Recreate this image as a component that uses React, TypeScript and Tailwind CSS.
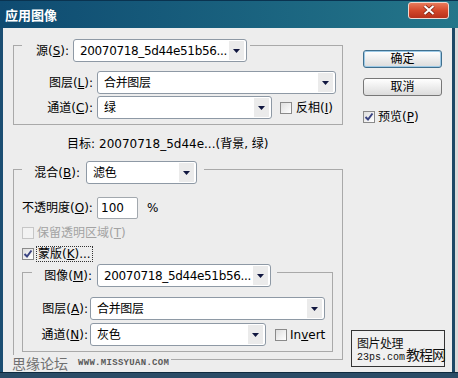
import React from "react";

const Arrow = () => (
  <svg width="7" height="4" viewBox="0 0 7 4">
    <path d="M0 0h7L3.5 4z" fill="#10163f" />
  </svg>
);

function Select({ value, w }: { value: string; w: string }) {
  return (
    <div
      className={`flex h-[23px] shrink-0 items-center rounded-[3px] border border-[#8e99a5] bg-white ${w}`}
    >
      <span className="flex-1 overflow-hidden whitespace-nowrap pl-[6px] tracking-[-0.35px] text-black">
        {value}
      </span>
      <span className="mr-[2px] flex h-[19px] w-[15px] shrink-0 items-center justify-center bg-[#ebebeb]">
        <Arrow />
      </span>
    </div>
  );
}

function Check({ on, off }: { on?: boolean; off?: boolean }) {
  return (
    <span
      className={`flex h-[12px] w-[12px] shrink-0 items-center justify-center border ${
        off
          ? "border-[#c6c6c6] bg-[#f2f2f2]"
          : "border-[#8a8a8a] bg-linear-to-br from-[#dedede] to-white"
      }`}
    >
      {on && (
        <svg width="10" height="10" viewBox="0 0 10 10">
          <path d="M1.5 5 L4 7.5 L8.5 1.5" stroke="#3a4482" strokeWidth="2" fill="none" />
        </svg>
      )}
    </span>
  );
}

function Button({ label, main }: { label: string; main?: boolean }) {
  return (
    <div
      className={`flex h-[18px] w-[79px] items-center justify-center rounded-[3px] border bg-linear-to-b from-white to-[#dcdcdc] text-black ${
        main
          ? "border-[#3f6f8e] shadow-[inset_0_0_0_1px_#9cc9e6]"
          : "border-[#777777]"
      }`}
    >
      {label}
    </div>
  );
}

const U = ({ c }: { c: string }) => <span className="underline">{c}</span>;

const App: React.FC = () => {
  return (
    <div className="relative flex h-[378px] w-[458px] flex-col overflow-hidden bg-[#1f3d54] text-[12px] leading-[14px] font-['DejaVu_Sans','Noto_Sans_CJK_SC',sans-serif] text-black">
      {/* title bar */}
      <div className="flex h-[28px] items-center justify-between border-t border-[#0a3350] bg-linear-to-r from-[#0f4b71] to-[#24768a] pl-[5px] pr-[9px]">
        <span className="text-[13px] font-bold text-white font-['Noto_Sans_CJK_SC',sans-serif]">
          应用图像
        </span>
        <div className="mb-[9px] flex h-[17px] w-[41px] items-center justify-center rounded-[3px] border border-[#f0d8d0] bg-linear-to-b from-[#e87a5a] via-[#d4482a] to-[#b8301a]">
          <svg width="12" height="10" viewBox="0 0 12 10">
            <path d="M1.5 1 L10.5 9 M10.5 1 L1.5 9" stroke="#7a2010" strokeWidth="3.6" />
            <path d="M1.5 1 L10.5 9 M10.5 1 L1.5 9" stroke="#ffffff" strokeWidth="2.2" />
          </svg>
        </div>
      </div>

      <div className="flex h-[344px]">
        <div className="w-[3px] bg-[#1b4e72]" />
        <div className="flex w-[449px] bg-[#ededed] pl-[10px]">
          {/* left column */}
          <div className="flex w-[330px] flex-col">
            {/* group 1 */}
            <div className="mt-[17px] flex flex-col border border-[#a9a9a9] pb-[5px]">
              <div className="-mt-[7px] ml-[8px] flex items-center self-start bg-[#ededed] pr-[3px]">
                <span className="w-[47px] text-right">
                  源(<U c="S" />):
                </span>
                <span className="ml-[4px]">
                  <Select value="20070718_5d44e51b56..." w="w-[174px]" />
                </span>
              </div>
              <div className="mt-[9px] flex items-center">
                <span className="w-[79px] text-right">
                  图层(<U c="L" />):
                </span>
                <span className="ml-[4px]">
                  <Select value="合并图层" w="w-[239px]" />
                </span>
              </div>
              <div className="mt-[2px] flex items-center">
                <span className="w-[79px] text-right">
                  通道(<U c="C" />):
                </span>
                <span className="ml-[4px]">
                  <Select value="绿" w="w-[175px]" />
                </span>
                <span className="ml-[8px]">
                  <Check />
                </span>
                <span className="ml-[4px]">
                  反相(<U c="I" />)
                </span>
              </div>
            </div>

            {/* target */}
            <div className="mt-[12px] flex h-[14px] items-center pl-[54px]">
              <span>目标:</span>
              <span className="ml-[4px]">20070718_5d44e...(背景, 绿)</span>
            </div>

            {/* group 2 */}
            <div className="mt-[18px] flex flex-col border border-[#a9a9a9] pb-[7px]">
              <div className="-mt-[9px] ml-[8px] flex items-center self-start bg-[#ededed] pr-[7px]">
                <span className="w-[58px] text-right">
                  混合(<U c="B" />):
                </span>
                <span className="ml-[6px]">
                  <Select value="滤色" w="w-[111px]" />
                </span>
              </div>
              <div className="mt-[13px] flex items-center pl-[8px]">
                <span className="w-[73px]">
                  不透明度(<U c="O" />):
                </span>
                <div className="ml-[2px] flex h-[22px] w-[41px] items-center rounded-[2px] border border-[#a2a8ae] bg-white pl-[3px]">
                  100
                </div>
                <span className="ml-[9px]">%</span>
              </div>
              <div className="mt-[6px] flex h-[16px] items-center pl-[8px]">
                <Check off />
                <span className="ml-[3px] text-[#a3a3a3]">
                  保留透明区域(<U c="T" />)
                </span>
              </div>
              <div className="mt-[5px] flex h-[16px] items-center pl-[8px]">
                <Check on />
                <span className="ml-[2px] border border-dotted border-[#333333] px-[1px]">
                  蒙版(<U c="K" />)...
                </span>
              </div>

              {/* inner group */}
              <div className="ml-[8px] mr-[9px] mt-[10px] flex flex-col border border-[#a9a9a9] pb-[5px]">
                <div className="-mt-[9px] ml-[9px] flex items-center self-start bg-[#ededed] pr-[6px]">
                  <span className="w-[60px] text-right">
                    图像(<U c="M" />):
                  </span>
                  <span className="ml-[5px]">
                    <Select value="20070718_5d44e51b56..." w="w-[174px]" />
                  </span>
                </div>
                <div className="mt-[10px] flex items-center">
                  <span className="w-[65px] text-right">
                    图层(<U c="A" />):
                  </span>
                  <span className="ml-[2px]">
                    <Select value="合并图层" w="w-[235px]" />
                  </span>
                </div>
                <div className="mt-[3px] flex items-center">
                  <span className="w-[65px] text-right">
                    通道(<U c="N" />):
                  </span>
                  <span className="ml-[2px]">
                    <Select value="灰色" w="w-[176px]" />
                  </span>
                  <span className="ml-[9px]">
                    <Check />
                  </span>
                  <span className="ml-[3px]">
                    In<U c="v" />ert
                  </span>
                </div>
              </div>
            </div>
          </div>

          {/* right column */}
          <div className="ml-[20px] flex w-[79px] flex-col">
            <div className="mt-[22px]">
              <Button label="确定" main />
            </div>
            <div className="mt-[10px]">
              <Button label="取消" />
            </div>
            <div className="mt-[13px] flex h-[16px] items-center">
              <Check on />
              <span className="ml-[3px]">
                预览(<U c="P" />)
              </span>
            </div>
          </div>
        </div>
        <div className="w-[3px] bg-[#1d4866]" />
        <div className="w-[3px] bg-[#d9d9d9]" />
      </div>
      <div className="h-[6px] border-t border-[#0e2a3e] bg-[#2a4c66]" />

      {/* watermarks */}
      <div className="absolute left-[12px] top-[355px] flex items-center bg-[#ededed] pr-[2px]">
        <span className="text-[14px] leading-[16px] text-[#707070] font-['Noto_Sans_CJK_SC',sans-serif]">
          思缘论坛
        </span>
        <span className="ml-[10px] text-[9px] font-bold uppercase tracking-[0.3px] text-[#5a5a5a] font-['Liberation_Mono',monospace]">
          www.missyuan.com
        </span>
      </div>
      <div className="absolute left-[351px] top-[330px] flex h-[37px] w-[94px] items-end whitespace-nowrap border border-[#333333] bg-[#f0f0f0] pb-[2px] pl-[5px] text-[#111111]">
        <div className="flex shrink-0 flex-col">
          <span className="text-[12px] leading-[17px] tracking-[-0.5px] font-['Noto_Sans_CJK_SC',sans-serif]">
            图片处理
          </span>
          <span className="text-[10px] leading-[13px] font-['Liberation_Mono',monospace]">
            23ps.com
          </span>
        </div>
        <span className="ml-[1px] shrink-0 text-[14px] leading-[20px] tracking-[-1px] font-['Noto_Sans_CJK_SC',sans-serif]">
          教程网
        </span>
      </div>
    </div>
  );
};

export default App;
